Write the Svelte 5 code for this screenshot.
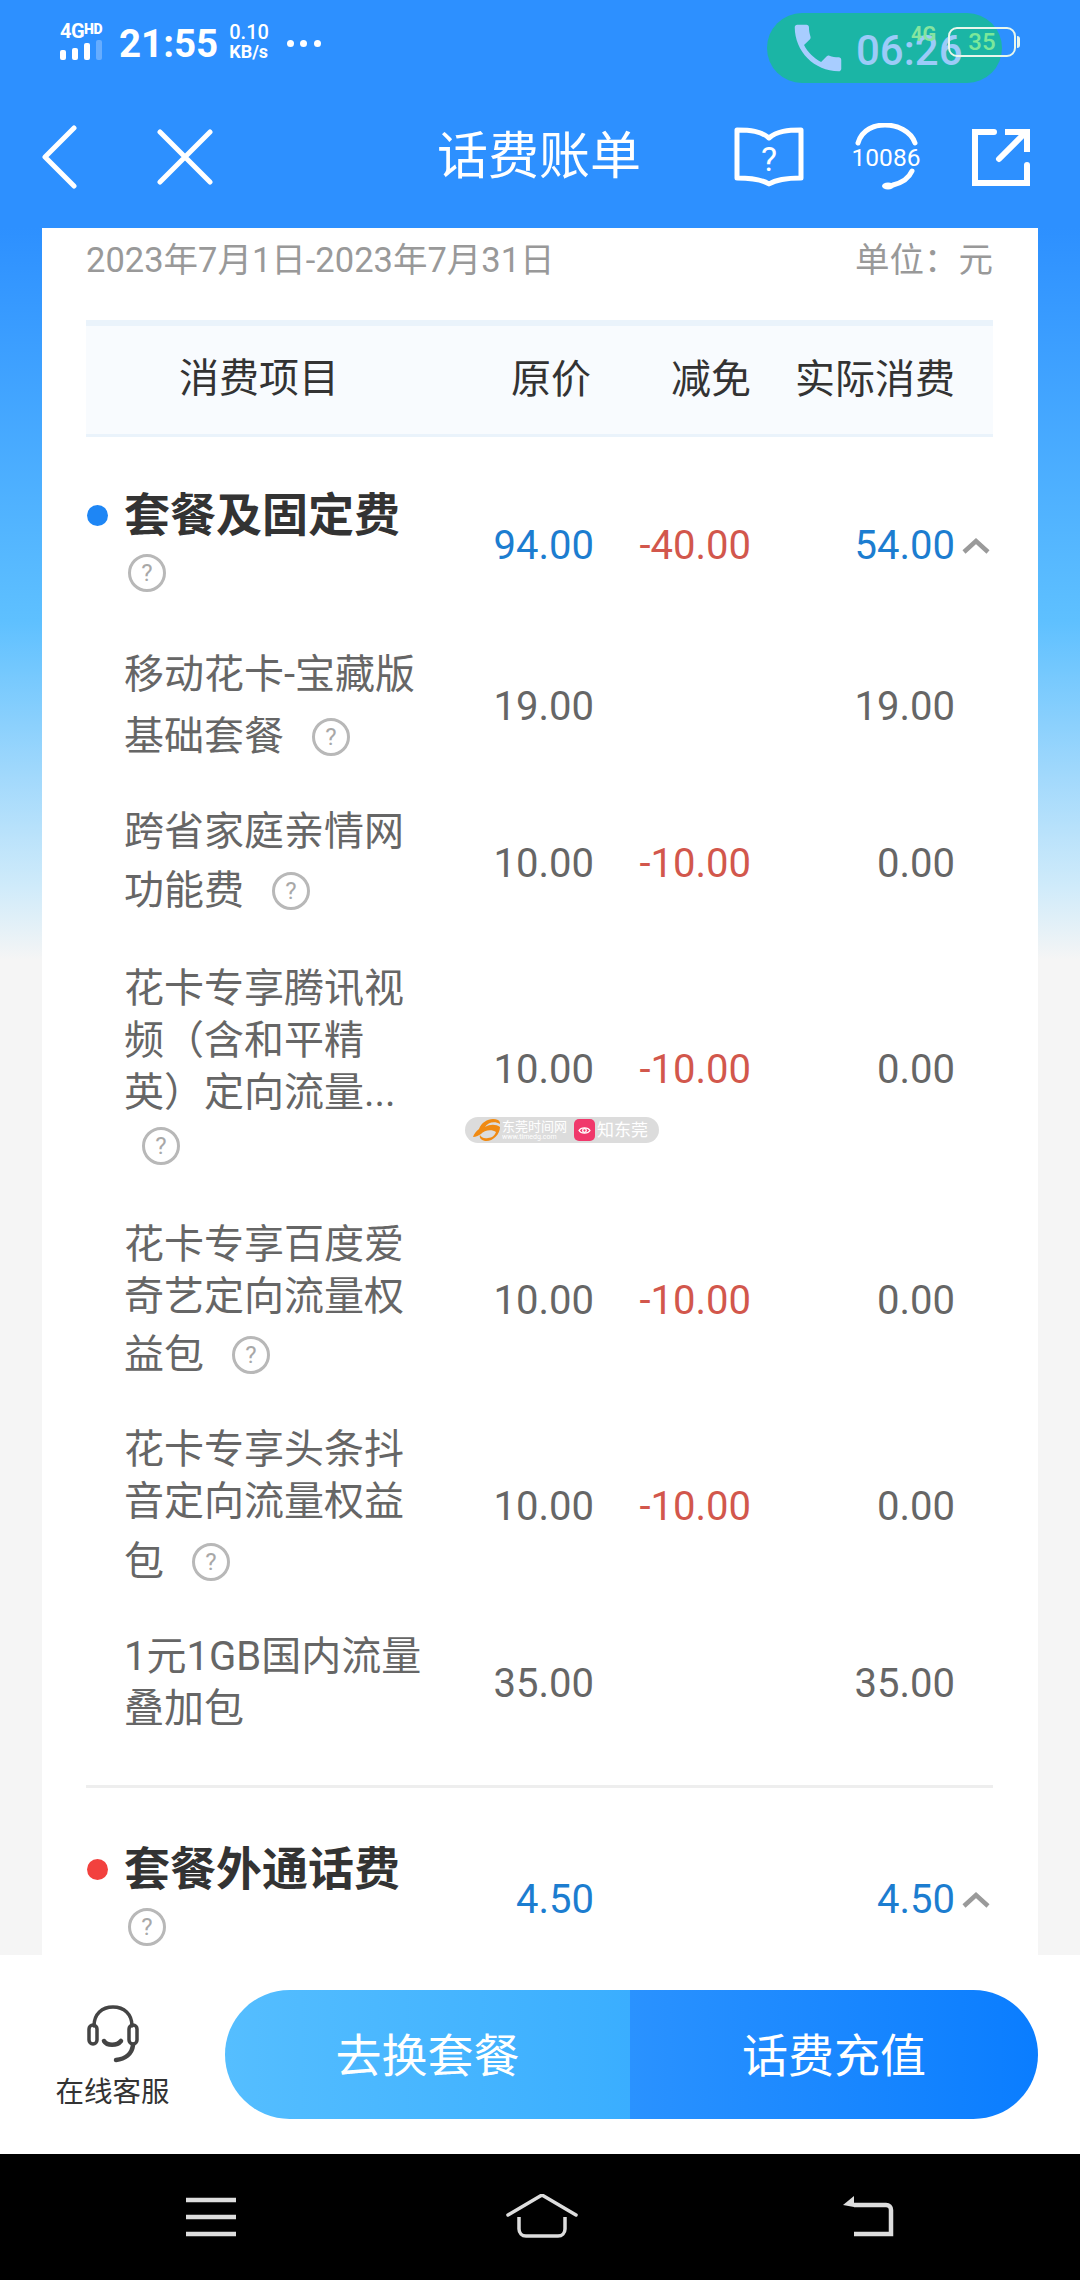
<script>
  const items = [
    { lines: ['移动花卡-宝藏版'], last: '基础套餐', h: 'm10', o: '19.00', d: '', a: '19.00' },
    { lines: ['跨省家庭亲情网'], last: '功能费', h: 'm7', o: '10.00', d: '-10.00', a: '0.00' },
    { lines: ['花卡专享腾讯视', '频（含和平精', '英）定向流量...'], last: '', h: 'm1', o: '10.00', d: '-10.00', a: '0.00' },
    { lines: ['花卡专享百度爱', '奇艺定向流量权'], last: '益包', h: 'm6', o: '10.00', d: '-10.00', a: '0.00' },
    { lines: ['花卡专享头条抖', '音定向流量权益'], last: '包', h: 'm8', o: '10.00', d: '-10.00', a: '0.00' },
    { lines: ['1元1GB国内流量', '叠加包'], last: null, h: '', o: '35.00', d: '', a: '35.00' }
  ];
</script>

<div class="page">
  <header class="top">
    <div class="status">
      <div class="signal">
        <span class="net">4G<b>HD</b></span>
        <span class="bars"><i class="b1"></i><i class="b2"></i><i class="b3"></i><i class="b4"></i></span>
      </div>
      <span class="clock">21:55</span>
      <span class="speed"><span>0.10</span><span class="kb">KB/s</span></span>
      <span class="dots"><i></i><i></i><i></i></span>
    </div>

    <div class="pill">
      <svg class="phone" viewBox="0 0 24 24" width="62" height="62"><path fill="#a8cdff" d="M6.600 10.800c1.400 2.800 3.800 5.100 6.600 6.600l2.200-2.200c.3-.3.7-.4 1-.2 1.100.4 2.300.6 3.600.6.600 0 1 .4 1 1V20c0 .6-.4 1-1 1C10.600 21 3 13.400 3 4c0-.6.4-1 1-1h3.500c.6 0 1 .4 1 1 0 1.300.2 2.500.6 3.600.1.300 0 .7-.2 1l-2.300 2.200z"/></svg>
      <span class="call">06:26</span>
    </div>
    <span class="g4">4G</span>
    <div class="battery"><span>35</span></div>
    <i class="cap"></i>

    <nav class="nav">
      <div class="nav-left">
        <svg width="40" height="66" viewBox="0 0 40 66" fill="none" stroke="#fff" stroke-width="5" stroke-linecap="round" stroke-linejoin="round"><path d="M32 4 3 33l29 29"/></svg>
        <svg width="56" height="56" viewBox="0 0 56 56" fill="none" stroke="#fff" stroke-width="5" stroke-linecap="round"><path d="M3 3l50 50M53 3 3 53"/></svg>
      </div>
      <h1>话费账单</h1>
      <div class="nav-right">
        <svg width="70" height="60" viewBox="0 0 70 60" fill="none" stroke="#fff" stroke-width="5" stroke-linejoin="round"><path d="M3 3c13 0 24 1 32 8 8-7 19-8 32-8v48c-12 0-24 1-32 6-8-5-20-6-32-6z" stroke-linecap="round"/><text x="35" y="44" text-anchor="middle" fill="#fff" stroke="none" font-size="34" font-family="Roboto, sans-serif">?</text></svg>
        <svg width="70" height="68" viewBox="0 0 70 68" fill="none" stroke="#fff" stroke-width="5" stroke-linecap="round"><path d="M5 20C9 6 22 2 32 2c12 0 26 6 30 18"/><path d="M59 48c-3 7-11 12-19 14"/><ellipse cx="35" cy="63" rx="6" ry="3.500" fill="#fff" stroke="none"/><text x="33" y="43" text-anchor="middle" fill="#fff" stroke="none" font-size="24.500" font-family="Roboto, sans-serif">10086</text></svg>
        <svg width="58" height="58" viewBox="0 0 58 58" fill="none" stroke="#fff" stroke-width="6" stroke-linecap="round" stroke-linejoin="miter"><path d="M22 4H3v51h52V37"/><path d="M27 31 52 6"/><path d="M33 4h22v20" stroke-linecap="butt"/></svg>
      </div>
    </nav>
  </header>

  <main class="main">
    <div class="card">
      <div class="period">
        <span>2023年7月1日-2023年7月31日</span>
        <span>单位：元</span>
      </div>

      <div class="thead grid">
        <span class="th-name">消费项目</span>
        <span class="num">原价</span>
        <span class="num">减免</span>
        <span class="num">实际消费</span>
      </div>

      <section class="group grid">
        <i class="dot blue"></i>
        <div class="g-name">
          <div class="g-title">套餐及固定费</div>
          <div class="g-help"><span class="q alone0">?</span></div>
        </div>
        <span class="num blue-t">94.00</span>
        <span class="num red-t">-40.00</span>
        <span class="num blue-t">54.00</span>
        <svg class="chev" width="30" height="18" viewBox="0 0 30 18" fill="none" stroke="#9a9a9a" stroke-width="4.500"><path d="M3 15 15 4l12 11"/></svg>
      </section>

      {#each items as it}
        <div class="item grid">
          <div class="i-name">
            {#each it.lines as l}
              <div class="ln">{l}</div>
            {/each}
            {#if it.last !== null}
              <div class="ln icon-ln {it.h}">
                {#if it.last}<span>{it.last}</span>{/if}
                <span class="q" class:lone={!it.last}>?</span>
              </div>
            {/if}
          </div>
          <span class="num">{it.o}</span>
          <span class="num red-t">{it.d}</span>
          <span class="num">{it.a}</span>
        </div>
      {/each}

      <hr class="rule" />

      <section class="group second grid">
        <i class="dot red"></i>
        <div class="g-name">
          <div class="g-title">套餐外通话费</div>
          <div class="g-help"><span class="q alone0">?</span></div>
        </div>
        <span class="num blue-t">4.50</span>
        <span class="num red-t"></span>
        <span class="num blue-t">4.50</span>
        <svg class="chev" width="30" height="18" viewBox="0 0 30 18" fill="none" stroke="#9a9a9a" stroke-width="4.500"><path d="M3 15 15 4l12 11"/></svg>
      </section>
    </div>
  </main>

  <div class="watermark">
    <svg width="30" height="24" viewBox="0 0 30 24"><path fill="#f08a12" d="M9 11C12 3 21-1 28 2c2 1 2 3 2 4-5-3-12-2-15 3 5-3 11-3 15 0 0 8-8 15-15 14-4-1-6-3-5-6 1 2 4 4 8 3 4 0 7-3 8-6-4-3-12-2-15 2-2 1-5 3-8 3 1-3 3-6 6-8z"/></svg>
    <span class="wm-a"><span>东莞时间网</span><small>www.timedg.com</small></span>
    <span class="wm-icon"><svg width="13" height="13" viewBox="0 0 13 13" fill="none" stroke="#fff" stroke-width="1.300"><path d="M1 6.500C3 3 10 3 12 6.500 10 10 3 10 1 6.500z"/><circle cx="6.500" cy="6.500" r="1.800"/></svg></span>
    <span class="wm-b">知东莞</span>
  </div>

  <div class="actions">
    <div class="service">
      <svg width="60" height="60" viewBox="0 0 60 60" fill="none" stroke="#444" stroke-width="3.500" stroke-linecap="round"><path d="M11 23C11 11 19 4 30 4s19 7 19 19"/><rect x="6" y="22" width="8" height="19" rx="4"/><rect x="46" y="22" width="8" height="19" rx="4"/><path d="M21 38c3 5 13 5 17 0" stroke-width="4.500"/><path d="M50 42c-1 9-8 14-17 15" stroke-width="4.500"/></svg>
      <span>在线客服</span>
    </div>
    <div class="btns">
      <div class="btn light">去换套餐</div>
      <div class="btn deep">话费充值</div>
    </div>
  </div>

  <footer class="sysnav">
    <svg width="52" height="40" viewBox="0 0 52 40" stroke="#ddd" stroke-width="4.500"><path d="M1 3h50M1 20h50M1 37h50"/></svg>
    <svg width="72" height="46" viewBox="0 0 72 46" fill="none" stroke="#ddd" stroke-width="3.500" stroke-linejoin="round"><path d="M2 21 36 1l34 20" stroke-linecap="round"/><path d="M13 23v12c0 4 3 7 7 7h32c4 0 7-3 7-7V23"/></svg>
    <svg class="back" width="52" height="42" viewBox="0 0 52 42" fill="none" stroke="#ddd" stroke-width="4.500"><path d="M12 9h32c3 0 5 2 5 5v24H12"/><path d="M12 0 1 9l11 2z" fill="#ddd" stroke="none"/></svg>
  </footer>
</div>

<style>
  :global(body) {
    margin: 0;
    background: #f5f5f5;
  }

  .page {
    position: relative;
    display: flex;
    flex-direction: column;
    width: 1080px;
    height: 2280px;
    overflow: hidden;
    font-family: Roboto, "Noto Sans CJK SC", sans-serif;
    background: linear-gradient(180deg, #2d90ff 0, #2d90ff 228px, #5ec0ff 620px, #a0d8fc 773px, #d0ebfa 888px, #f5f5f5 960px);
  }

  .top {
    height: 228px;
    flex: none;
    color: #fff;
  }

  .status {
    display: flex;
    align-items: flex-start;
    height: 100px;
    padding-left: 60px;
    box-sizing: border-box;
  }

  .signal {
    width: 59px;
    padding-top: 21px;
  }

  .net {
    display: block;
    font-size: 20px;
    font-weight: 700;
    line-height: 17px;
    letter-spacing: -0.5px;
  }

  .net b {
    font-size: 14px;
    vertical-align: 4px;
  }

  .bars {
    display: flex;
    align-items: flex-end;
    gap: 6px;
    height: 20px;
  }

  .bars i {
    display: block;
    width: 6px;
    border-radius: 2px;
    background: #fff;
  }

  .b1 { height: 10px; }
  .b2 { height: 12px; }
  .b3 { height: 17px; }
  .bars .b4 { height: 20px; background: #66adff; }

  .clock {
    font-size: 38.500px;
    font-weight: 700;
    line-height: 88px;
  }

  .speed {
    display: flex;
    flex-direction: column;
    margin-left: 11px;
    padding-top: 23px;
    line-height: 19px;
    font-size: 20px;
    font-weight: 500;
  }

  .speed .kb {
    font-size: 18px;
    font-weight: 700;
  }

  .dots {
    display: flex;
    gap: 6.500px;
    margin-left: 18px;
    padding-top: 40px;
  }

  .dots i {
    width: 7px;
    height: 7px;
    border-radius: 50%;
    background: #fff;
  }

  .pill {
    position: absolute;
    left: 767px;
    top: 13px;
    width: 235px;
    height: 70px;
    border-radius: 35px;
    background: #1bb5a5;
  }

  .phone {
    position: absolute;
    left: 20px;
    top: 4px;
  }

  .call {
    position: absolute;
    left: 89px;
    top: 10px;
    font-size: 42px;
    font-weight: 500;
    line-height: 56px;
    color: #9ccbf8;
  }

  .g4 {
    position: absolute;
    left: 911px;
    top: 24px;
    font-size: 20px;
    font-weight: 700;
    line-height: 20px;
    color: #86e5a0;
  }

  .battery {
    position: absolute;
    left: 948px;
    top: 27px;
    display: flex;
    align-items: center;
    justify-content: center;
    width: 68px;
    height: 30px;
    box-sizing: border-box;
    border: 2.500px solid #e9f7ec;
    border-radius: 9px;
    font-size: 24px;
    font-weight: 500;
    color: #7be89a;
  }

  .cap {
    position: absolute;
    left: 1017px;
    top: 36px;
    width: 3px;
    height: 12px;
    border-radius: 0 3px 3px 0;
    background: #e9f7ec;
  }

  .nav {
    display: grid;
    grid-template-columns: 1fr auto 1fr;
    align-items: center;
    height: 114px;
    padding: 0 44px 0 42px;
    box-sizing: border-box;
  }

  .nav h1 {
    margin: 0;
    font-size: 51px;
    font-weight: 400;
    line-height: 60px;
  }

  .nav-left {
    display: flex;
    align-items: center;
    gap: 75px;
  }

  .nav-right {
    display: flex;
    align-items: center;
    justify-content: flex-end;
    gap: 49px;
    margin-right: 6px;
  }

  .main {
    flex: 1;
    min-height: 0;
    overflow: hidden;
  }

  .card {
    margin: 0 42px;
    padding: 0 45px 0 44px;
    background: #fff;
    color: #666;
  }

  .period {
    display: flex;
    justify-content: space-between;
    align-items: center;
    height: 58px;
    margin-bottom: 34px;
    font-size: 34.500px;
    color: #999;
  }

  .grid {
    display: grid;
    grid-template-columns: 38px 308px 162px 157px 204px 38px;
    align-items: center;
  }

  .num {
    padding-top: 1px;
    text-align: right;
    font-size: 40px;
    line-height: 52px;
  }

  .thead {
    height: 117px;
    box-sizing: border-box;
    border-top: 6px solid #eaf3fb;
    border-bottom: 3px solid #eaf3fb;
    background: #f8fbfe;
    color: #333;
  }

  .thead .num {
    padding-top: 0;
    font-size: 40px;
  }

  .th-name {
    grid-column: 1 / span 2;
    padding-bottom: 2px;
    text-align: center;
    font-size: 40px;
    line-height: 52px;
  }

  .thead .num:nth-of-type(2) {
    grid-column: 3;
    padding-right: 3px;
  }

  .group {
    padding: 48px 0 27px;
  }

  .group.second {
    padding-top: 51px;
  }

  .group .num {
    padding-top: 5px;
  }

  .dot {
    align-self: start;
    width: 21px;
    height: 21px;
    margin: 20px 0 0 1px;
    border-radius: 50%;
  }

  .blue { background: #1e86f5; }
  .red { background: #f2413e; }

  .g-title {
    font-size: 46px;
    font-weight: 700;
    line-height: 60px;
    color: #333;
    white-space: nowrap;
  }

  .g-help {
    display: flex;
    align-items: center;
    height: 56px;
  }

  .blue-t { color: #1c7dd0; }
  .red-t { color: #d2574c; }

  .chev {
    justify-self: end;
    margin-right: 2px;
    position: relative;
    top: 3px;
  }

  .q {
    display: inline-flex;
    align-items: center;
    justify-content: center;
    width: 38px;
    height: 38px;
    box-sizing: border-box;
    margin-left: 28px;
    border: 3px solid #b8b8b8;
    border-radius: 50%;
    font-size: 24px;
    line-height: 1;
    color: #a8a8a8;
  }

  .q.alone0 { margin-left: 4px; }
  .q.lone { margin-left: 18px; }

  .item {
    padding: 21px 0 22px;
  }

  .i-name {
    grid-column: 1 / span 2;
    padding-left: 38px;
    font-size: 40px;
    color: #666;
    white-space: nowrap;
  }

  .ln {
    line-height: 52px;
  }

  .icon-ln {
    display: flex;
    align-items: center;
    height: 52px;
  }

  .m1 { margin: 1px 0 4px; }
  .m6 { margin-top: 6px; }
  .m7 { margin: 7px 0 3px; }
  .m8 { margin-top: 8px; }
  .m10 { margin-top: 10px; }

  .rule {
    height: 3px;
    margin: 28px 0 0;
    border: 0;
    background: #eeeeee;
  }

  .watermark {
    position: absolute;
    left: 465px;
    top: 1117px;
    display: flex;
    align-items: center;
    width: 194px;
    height: 26px;
    box-sizing: border-box;
    padding-left: 5px;
    border-radius: 13px;
    background: #dcdcdc;
    color: #fff;
    white-space: nowrap;
  }

  .wm-a {
    display: flex;
    flex-direction: column;
    width: 72px;
    margin-left: 2px;
    font-size: 13px;
    line-height: 15px;
    overflow: hidden;
  }

  .wm-a small {
    font-size: 7px;
    line-height: 7px;
  }

  .wm-icon {
    display: flex;
    align-items: center;
    justify-content: center;
    width: 21px;
    height: 22px;
    border-radius: 5px;
    background: #f0386b;
  }

  .wm-b {
    margin-left: 2px;
    font-size: 17px;
    line-height: 22px;
  }

  .actions {
    display: flex;
    align-items: center;
    height: 199px;
    flex: none;
    background: #fff;
    padding-right: 42px;
    box-sizing: border-box;
  }

  .service {
    display: flex;
    flex-direction: column;
    align-items: center;
    gap: 10px;
    width: 225px;
    font-size: 28.500px;
    line-height: 40px;
    color: #333;
    padding-top: 6px;
  }

  .btns {
    display: flex;
    flex: 1;
    height: 129px;
    border-radius: 65px;
    overflow: hidden;
    color: #fff;
    font-size: 46px;
  }

  .btn {
    display: flex;
    align-items: center;
    justify-content: center;
    padding-bottom: 6px;
    box-sizing: border-box;
  }

  .light {
    width: 405px;
    background: linear-gradient(90deg, #55beff, #3aaeff);
  }

  .deep {
    flex: 1;
    background: linear-gradient(90deg, #2a92ff, #0a7dff);
  }

  .sysnav {
    display: flex;
    align-items: center;
    height: 126px;
    flex: none;
    background: #000;
    padding-left: 185px;
    box-sizing: border-box;
    gap: 269px;
  }

  .back {
    margin-left: -5px;
  }
</style>
